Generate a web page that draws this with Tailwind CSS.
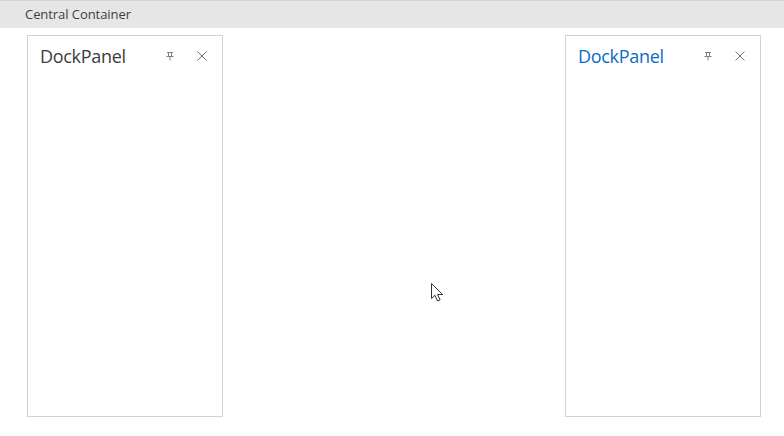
<!DOCTYPE html>
<html lang="en">
<head>
    <meta charset="UTF-8">
    <title>Dock Panels</title>
    <script src="https://cdn.jsdelivr.net/npm/@tailwindcss/browser@4"></script>
</head>
<body class="bg-white w-[784px] h-[436px] overflow-hidden relative font-['Open_Sans',sans-serif]">
    <div class="h-[28px] bg-[#e6e6e6] border-t border-[#d4d4d4] pl-[25px] flex items-center text-[13px] tracking-[-0.06px] text-[#404040]">Central Container</div>
    <div class="flex justify-between pl-[27px] pr-[23px] pt-[7px]">
        <div class="w-[196px] h-[382px] border border-[#d2d2d2] bg-white flex items-start justify-between pl-[12px] pr-[14px] pt-[7px]">
            <span class="text-[18px] leading-[26px] tracking-[-0.3px] text-[#3c3c3c]">DockPanel</span>
            <div class="flex items-center gap-[20px] h-[26px]">
                <svg width="12" height="12" viewBox="0 0 12 12" fill="none" stroke="#808080" stroke-width="1"><path d="M3 2.5h6M4.5 2.5v4M7.5 2.5v4M2.5 6.5h7M6 6.5v4"/></svg>
                <svg width="12" height="12" viewBox="0 0 12 12" fill="none" stroke="#707070" stroke-width="1"><path d="M1.5 1.5l9 9M10.5 1.5l-9 9"/></svg>
            </div>
        </div>
        <div class="w-[196px] h-[382px] border border-[#d2d2d2] bg-white flex items-start justify-between pl-[12px] pr-[14px] pt-[7px]">
            <span class="text-[18px] leading-[26px] tracking-[-0.3px] text-[#0a6cc4]">DockPanel</span>
            <div class="flex items-center gap-[20px] h-[26px]">
                <svg width="12" height="12" viewBox="0 0 12 12" fill="none" stroke="#808080" stroke-width="1"><path d="M3 2.5h6M4.5 2.5v4M7.5 2.5v4M2.5 6.5h7M6 6.5v4"/></svg>
                <svg width="12" height="12" viewBox="0 0 12 12" fill="none" stroke="#707070" stroke-width="1"><path d="M1.5 1.5l9 9M10.5 1.5l-9 9"/></svg>
            </div>
        </div>
    </div>
    <svg class="absolute left-[430px] top-[282px]" width="16" height="21" viewBox="0 0 16 21" fill="#fff" stroke="#333" stroke-width="1"><path d="M1.5 1.5v15l3.5-3.2 2.5 5.7 2.6-1.1-2.5-5.4h5z"/></svg>
</body>
</html>
